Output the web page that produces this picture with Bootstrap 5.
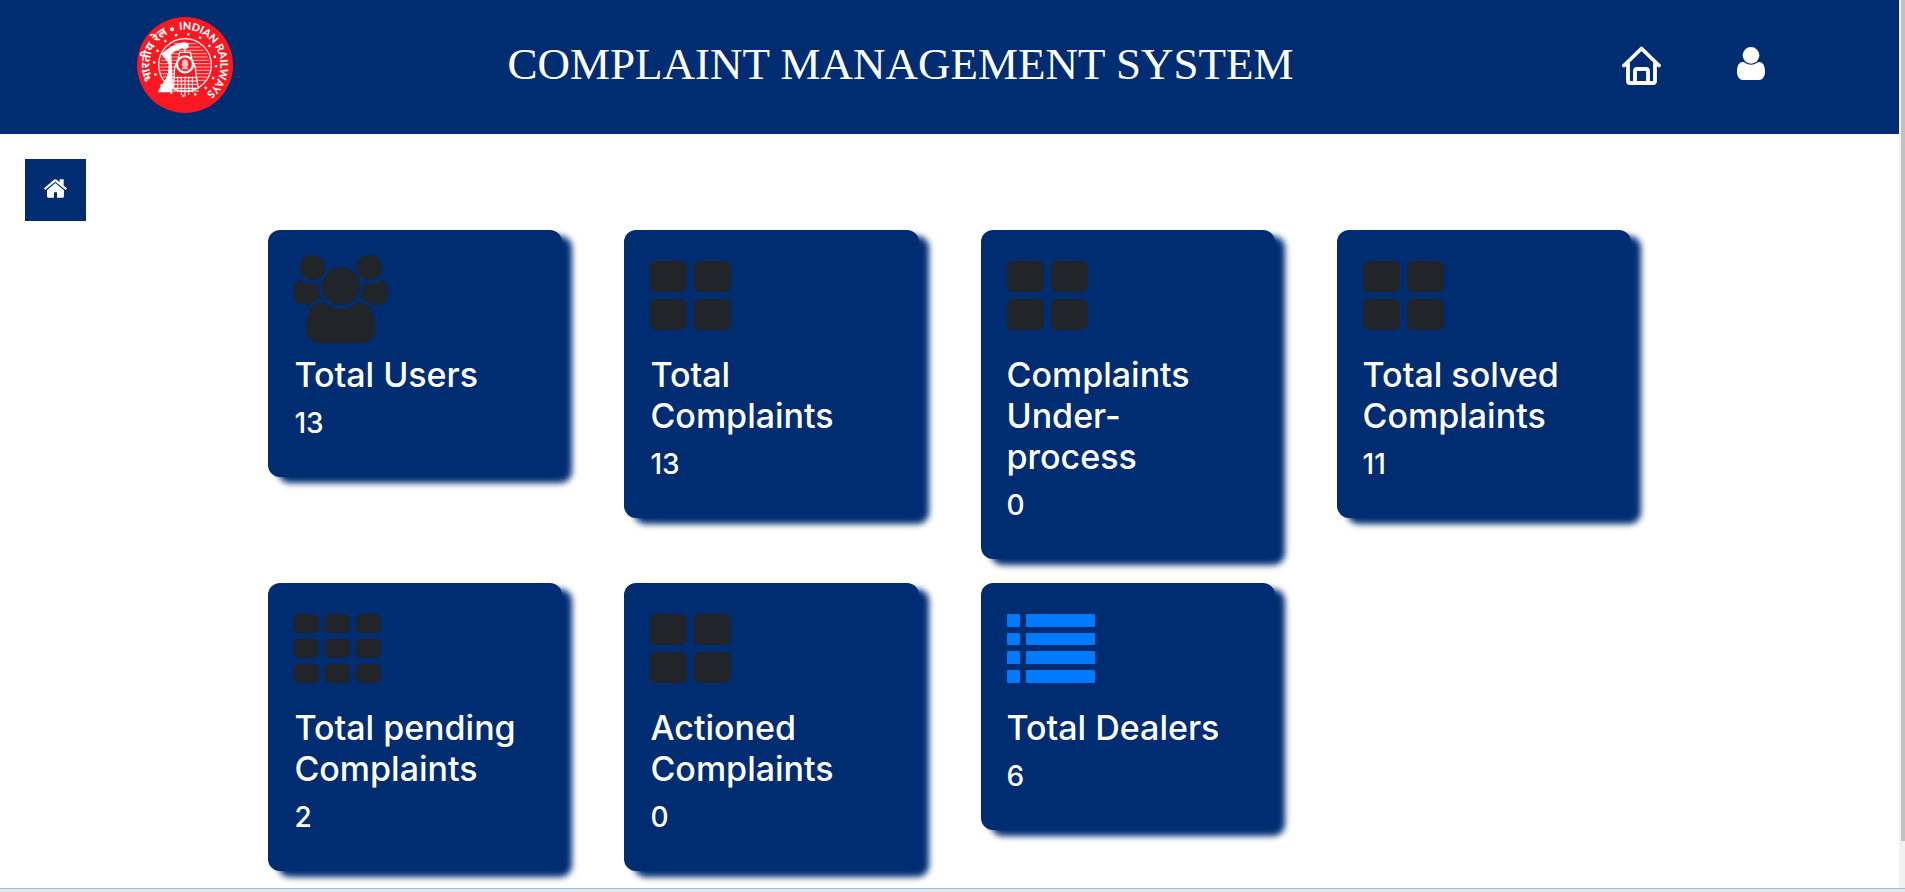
<!DOCTYPE html>
<html lang="en">
<head>
<meta charset="utf-8">
<meta name="viewport" content="width=device-width, initial-scale=1">
<title>Complaint Management System</title>
<link href="https://cdn.jsdelivr.net/npm/bootstrap@5.3.0/dist/css/bootstrap.min.css" rel="stylesheet">
<style>
  :root { --navy: #002d72; --ink: #212529; }
  body { background: #fff; font-family: Inter, "Liberation Sans", sans-serif; }
  .site-header { background: var(--navy); min-height: 134px; padding: 0 134px 4px 137px; }
  .site-title { font: 400 45px/56px "Liberation Serif", serif; margin: 0 54px 2px 0; }
  .header-links { gap: 76px; }
  .menu-btn { width: 61px; height: 62px; margin: 25px 25px 9px; background: var(--navy); border: 0; border-radius: 0; }
  .stat-col { padding: 0 31px 24px; }
  .stat-card { background: var(--navy); color: #fff; border: 0; border-radius: 12px; padding: 25px 26px 37px; box-shadow: 10px 6px 6px var(--navy); }
  .stat-icon { width: 94px; height: 88px; margin-bottom: 11px; color: var(--ink); fill: currentColor; }
  .stat-icon.blue { color: #007bff; }
  .stat-title { font-size: 34px; line-height: 41px; font-weight: 500; margin-bottom: 11px; }
  .stat-count { font-size: 28px; line-height: 34px; font-weight: 500; margin: 0; }
  .scroll-track { width: 6px; background: #f1f1f1; padding-left: 2px; }
  .scroll-thumb { height: 841px; background: #c1c1c1; }
  .bottom-edge { height: 4px; background: #d9eaf2; border-top: 1px solid #a9bac4; }
</style>
</head>
<body class="d-flex flex-column min-vh-100">
<svg class="d-none" aria-hidden="true">
  <symbol id="i-large" viewBox="0 0 94 88">
    <rect y="6" width="37" height="31" rx="6"/><rect x="44" y="6" width="37" height="31" rx="6"/>
    <rect y="44" width="37" height="31" rx="6"/><rect x="44" y="44" width="37" height="31" rx="6"/>
  </symbol>
  <symbol id="i-th" viewBox="0 0 94 88">
    <rect y="6" width="25" height="19" rx="5"/><rect x="31" y="6" width="25" height="19" rx="5"/><rect x="62" y="6" width="25" height="19" rx="5"/>
    <rect y="31" width="25" height="19" rx="5"/><rect x="31" y="31" width="25" height="19" rx="5"/><rect x="62" y="31" width="25" height="19" rx="5"/>
    <rect y="56" width="25" height="19" rx="5"/><rect x="31" y="56" width="25" height="19" rx="5"/><rect x="62" y="56" width="25" height="19" rx="5"/>
  </symbol>
  <symbol id="i-list" viewBox="0 0 94 88">
    <rect y="6" width="13" height="13" rx="1"/><rect x="19" y="6" width="69" height="13" rx="1"/>
    <rect y="25" width="13" height="12" rx="1"/><rect x="19" y="25" width="69" height="12" rx="1"/>
    <rect y="43" width="13" height="13" rx="1"/><rect x="19" y="43" width="69" height="13" rx="1"/>
    <rect y="62" width="13" height="13" rx="1"/><rect x="19" y="62" width="69" height="13" rx="1"/>
  </symbol>
  <symbol id="i-users" viewBox="0 0 282 264">
    <circle cx="56" cy="38" r="38"/><circle cx="226" cy="38" r="38"/><circle cx="141" cy="94" r="57"/>
    <path d="M37 220C37 180 52 142 86 142C94 142 110 162 141 162C172 162 188 142 197 142C230 142 244 180 244 220C244 248 228 264 205 264H76C53 264 37 248 37 220Z"/>
    <path d="M17 75C22 75 36 88 56 88C64 88 70 87 76 84Q75 90 75 94Q75 114 86 132C70 132 58 139 48 150H28C10 150 0 141 0 124C0 105 3 75 17 75Z"/>
    <path d="M265 75C260 75 246 88 226 88C218 88 212 87 206 84Q207 90 207 94Q207 114 196 132C212 132 224 139 234 150H254C272 150 282 141 282 124C282 105 279 75 265 75Z"/>
  </symbol>
</svg>

<div class="d-flex flex-grow-1">
  <div class="flex-grow-1">
    <header class="site-header d-flex align-items-center text-white">
      <a href="#" aria-label="Indian Railways">
        <svg class="d-block" width="96" height="96" viewBox="0 0 288 288">
          <defs>
            <path id="arcR" d="M38 144A106 106 0 0 1 250 144A106 106 0 0 1 144 250"/>
            <path id="arcH" d="M48 190A106 106 0 0 1 144 38"/>
          </defs>
          <circle cx="144" cy="144" r="144" fill="#fc1820"/>
          <text fill="#fff" font-family="Lato, sans-serif" font-weight="900" font-size="32"><textPath href="#arcR" startOffset="150">INDIAN RAILWAYS</textPath></text>
          <text fill="#fff" font-family="'Noto Sans', sans-serif" font-weight="700" font-size="36"><textPath href="#arcH">भारतीय रेल</textPath></text>
          <circle cx="105" cy="37" r="6" fill="#fff"/>
          <g fill="none" stroke="#fff"><circle cx="144" cy="144" r="79" stroke-width="4"/>
            <path stroke-width="2" d="M110 80H178M98 90H190M88 100H200M80 110H208M76 120H212M72 130H216M70 140H218M70 150H218M70 160H218M72 170H216M78 180H210M84 190H204"/></g>
          <circle cx="144" cy="144" r="93" fill="none" stroke="#fff" stroke-width="7" stroke-dasharray="7 30"/>
          <path fill="#fff" d="M73 112C91 94 120 78 140 76C153 75 160 84 153 94C141 89 116 100 103 111L108 208L105 226H63C70 202 89 192 93 166L95 141C88 128 80 119 73 112Z"/>
          <path fill="#fc1820" stroke="#fff" stroke-width="4" d="M110 214L112 166Q112 144 122 134L128 106H160L166 134Q176 144 176 166L184 214Z"/>
          <path fill="none" stroke="#fff" stroke-width="3" d="M110 182H178M110 192H182M108 202H184M122 178V226M133 178V234M144 178V238M155 178V234M166 178V226M106 222H186M138 94H150M144 94V108"/>
          <circle cx="144" cy="142" r="24" fill="#fc1820" stroke="#fff" stroke-width="7"/>
          <path fill="#fff" fill-opacity=".75" d="M136 131Q144 122 152 131L154 145L150 149L154 157H134L138 149L134 145Z"/>
        </svg>
      </a>
      <h1 class="site-title flex-grow-1 text-center">COMPLAINT MANAGEMENT SYSTEM</h1>
      <nav class="header-links d-flex align-items-center">
        <a href="#" class="text-white" aria-label="Home">
          <svg class="d-block" width="39" height="39" viewBox="0 0 39 39" fill="none" stroke="#fff" stroke-width="3.8" stroke-linecap="round" stroke-linejoin="round"><path d="M2 19.500L19.500 2.500L37 19.500M6 17.500V35Q6 37 8 37H31Q33 37 33 35V17.500M13 36V25Q13 23 15 23H24Q26 23 26 25V36"/></svg>
        </a>
        <a href="#" class="text-white" aria-label="Profile">
          <svg class="d-block mb-1" width="28" height="33" viewBox="0 0 84 99" fill="#fff"><circle cx="42" cy="25" r="25"/><path d="M0 75C0 58 5 45 18 45C22 45 28 53 42 53C56 53 62 45 66 45C79 45 84 58 84 75C84 89 76 99 66 99H18C8 99 0 89 0 75Z"/></svg>
        </a>
      </nav>
    </header>

    <main>
      <button type="button" class="menu-btn btn d-flex align-items-center justify-content-center p-0 pb-1" aria-label="Dashboard">
        <svg width="23" height="19" viewBox="0 0 69 57" fill="#fff"><path d="M34 12L60 34V52Q60 56 56 56H39V40H30V56H13Q9 56 9 52V34Z"/><path d="M3 33L0 28L29 3Q34-1 39 3L47 10V1H59V20L69 28L65 33L34 8Z"/></svg>
      </button>

      <section class="col-9 mx-auto" aria-label="Statistics">
        <div class="row row-cols-4 g-0 align-items-start">
          <div class="stat-col"><div class="stat-card">
            <svg class="stat-icon d-block"><use href="#i-users"/></svg>
            <h2 class="stat-title">Total Users</h2><p class="stat-count">13</p>
          </div></div>
          <div class="stat-col"><div class="stat-card">
            <svg class="stat-icon d-block"><use href="#i-large"/></svg>
            <h2 class="stat-title">Total Complaints</h2><p class="stat-count">13</p>
          </div></div>
          <div class="stat-col"><div class="stat-card">
            <svg class="stat-icon d-block"><use href="#i-large"/></svg>
            <h2 class="stat-title">Complaints Under-<br>process</h2><p class="stat-count">0</p>
          </div></div>
          <div class="stat-col"><div class="stat-card">
            <svg class="stat-icon d-block"><use href="#i-large"/></svg>
            <h2 class="stat-title">Total solved Complaints</h2><p class="stat-count">11</p>
          </div></div>
          <div class="stat-col pb-0"><div class="stat-card">
            <svg class="stat-icon d-block"><use href="#i-th"/></svg>
            <h2 class="stat-title">Total pending Complaints</h2><p class="stat-count">2</p>
          </div></div>
          <div class="stat-col pb-0"><div class="stat-card">
            <svg class="stat-icon d-block"><use href="#i-large"/></svg>
            <h2 class="stat-title">Actioned Complaints</h2><p class="stat-count">0</p>
          </div></div>
          <div class="stat-col pb-0"><div class="stat-card">
            <a href="#" aria-label="View dealers"><svg class="stat-icon blue d-block"><use href="#i-list"/></svg></a>
            <h2 class="stat-title">Total Dealers</h2><p class="stat-count">6</p>
          </div></div>
        </div>
      </section>
    </main>
  </div>
  <div class="scroll-track flex-shrink-0" aria-hidden="true"><div class="scroll-thumb"></div></div>
</div>
<div class="bottom-edge"></div>
<script src="https://cdn.jsdelivr.net/npm/bootstrap@5.3.0/dist/js/bootstrap.bundle.min.js"></script>
</body>
</html>
